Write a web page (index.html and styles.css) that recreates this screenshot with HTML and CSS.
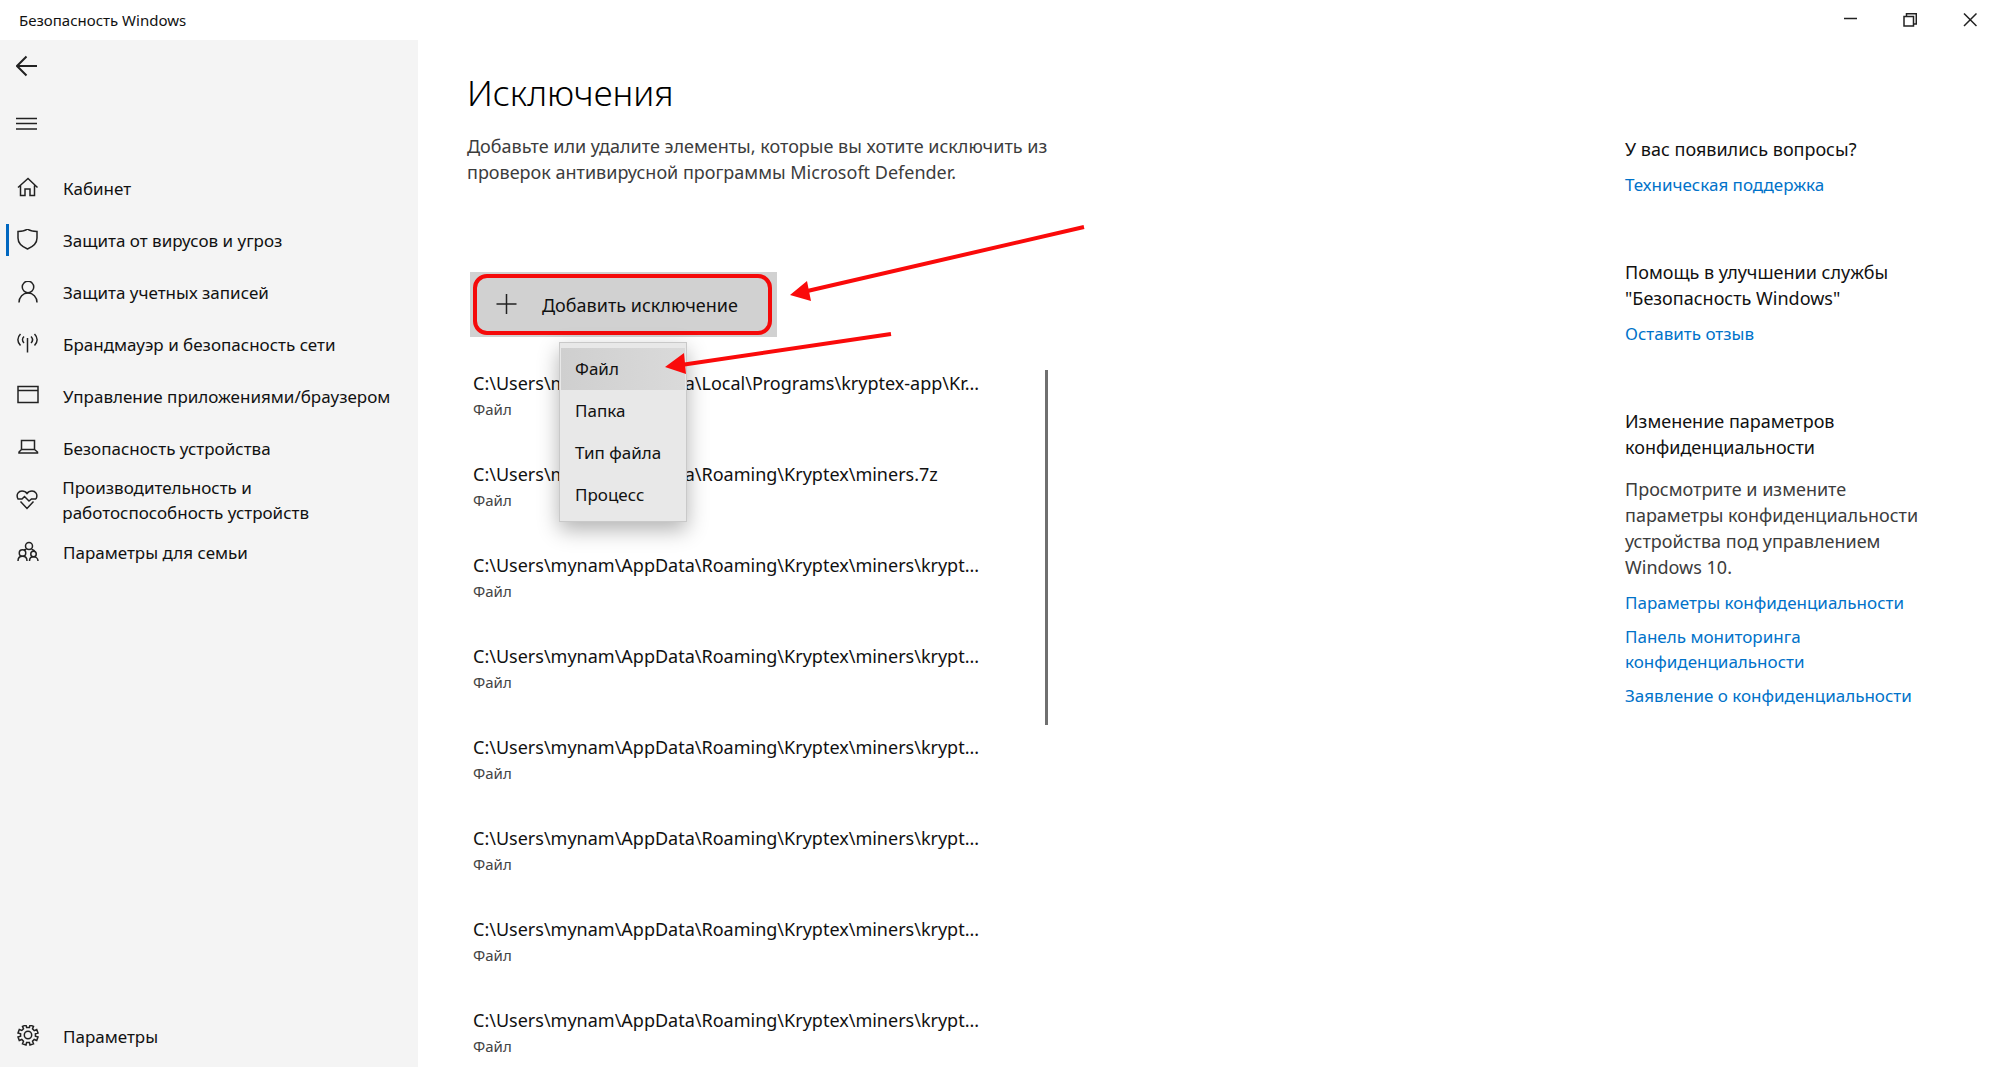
FILE: index.html
```html
<!DOCTYPE html>
<html lang="ru">
<head>
<meta charset="utf-8">
<meta name="viewport" content="width=device-width, initial-scale=1">
<title>Безопасность Windows</title>
<link rel="stylesheet" href="styles.css">
</head>
<body>
<header class="titlebar">
  <span class="titlebar-name">Безопасность Windows</span>
  <div class="window-controls">
    <button type="button" class="window-button" aria-label="Свернуть"><svg width="14" height="14" viewBox="0 0 14 14"><path d="M1 5.500h13"/></svg></button>
    <button type="button" class="window-button" aria-label="Восстановить"><svg width="14" height="14" viewBox="0 0 14 14"><path d="M1 3.500h9.500v9.500H1zM3.500 3.200V.75h9.800v10.250H10.500"/></svg></button>
    <button type="button" class="window-button" aria-label="Закрыть"><svg width="14" height="14" viewBox="0 0 14 14"><path d="M1 .5l12.500 12.500M13.500.5l-12.500 12.500"/></svg></button>
  </div>
</header>
<div class="app">
  <aside class="sidebar">
    <button type="button" class="icon-button" aria-label="Назад"><svg class="icon" viewBox="0 0 22 22"><path class="bold" d="M21 11H1M10.500 1.500L1 11l9.500 9.500"/></svg></button>
    <button type="button" class="icon-button" aria-label="Меню"><svg class="icon" viewBox="0 0 22 22"><path d="M0 5.500h21M0 10.500h21M0 16h21"/></svg></button>
    <nav class="nav">
      <a href="#" class="nav-item"><svg class="icon" viewBox="0 0 22 22"><path d="M1 10.500L11 1.500l9.500 9M3.500 8.500v10h4.500v-6.500h5V18.500h4.500V8.500"/></svg><span>Кабинет</span></a>
      <a href="#" class="nav-item active" aria-current="page"><svg class="icon" viewBox="0 0 22 22"><path d="M10.500 0C8 2 4.500 2.500 1 2.500V9c0 5 3.500 8.500 9.500 11 6-2.500 9.500-6 9.500-11V2.500C16.500 2.500 13 2 10.500 0z"/></svg><span>Защита от вирусов и угроз</span></a>
      <a href="#" class="nav-item"><svg class="icon" viewBox="0 0 22 22"><circle cx="11" cy="6" r="5.750"/><path d="M2 21.500c0-5.500 4-9.500 9-9.500s9 4 9 9.500"/></svg><span>Защита учетных записей</span></a>
      <a href="#" class="nav-item"><svg class="icon" viewBox="0 0 22 22"><path d="M10.500 5v14.500M3.500 1C0 4.500 0 9 3.500 12.500M17.500 1c3.500 3.500 3.500 8 0 11.500M7 3.500c-2 2-2 4.500 0 6.500M14 3.500c2 2 2 4.500 0 6.500"/></svg><span>Брандмауэр и безопасность сети</span></a>
      <a href="#" class="nav-item"><svg class="icon" viewBox="0 0 22 22"><path d="M1 1.500h20v16H1zM1 5.500h20"/></svg><span>Управление приложениями/браузером</span></a>
      <a href="#" class="nav-item"><svg class="icon" viewBox="0 0 22 22"><path d="M4.500 3.500h13v9h-13zM4.500 12.500L2 15v1h18.500v-1L17.500 12.500"/></svg><span>Безопасность устройства</span></a>
      <a href="#" class="nav-item"><svg class="icon" viewBox="0 0 22 22"><path d="M2 10C-.5 5 3 2 6 2c2.500 0 4 1 5 2.500C12 3 13.500 2 16 2c3 0 6.500 3 4 8M1.500 10H6l2.500-2.500 4.500 4.500 2.500-2H20M4.500 12.500L11 19.500l6.500-7"/></svg><span>Производительность и работоспособность устройств</span></a>
      <a href="#" class="nav-item"><svg class="icon" viewBox="0 0 22 22"><circle cx="12" cy="5" r="3.500"/><circle cx="5.500" cy="12" r="3.250"/><circle cx="16.500" cy="13" r="2.750"/><path d="M1 20c0-3 2-4.700 4.500-4.700S10 17 10 20M12.500 20c0-2.500 1.500-4.200 4-4.200s4.500 1.700 4.500 4.200M7 9c.8-.5 1.500-.8 2.500-.8M14.500 8.200c1.700.5 3 1.200 3.500 2.500"/></svg><span>Параметры для семьи</span></a>
    </nav>
    <a href="#" class="nav-item settings"><svg class="icon" viewBox="0 0 22 22"><circle cx="11" cy="10" r="3.700"/><path d="M9 0l.6 2.600h2.800L13 0l3.500 1.400-1 2.500 1.700 1.700 2.500-1L21 8l-2.600.7v2.600L21 12l-1.300 3.500-2.500-1-1.700 1.700 1 2.500L13 20l-.6-2.600H9.600L9 20l-3.500-1.300 1-2.500-1.700-1.700-2.500 1L1 12l2.600-.7V8.700L1 8l1.300-3.500 2.500 1 1.700-1.600-1-2.500z"/></svg><span>Параметры</span></a>
  </aside>
  <main class="content">
    <section class="exclusions">
      <h1>Исключения</h1>
      <p class="lead">Добавьте или удалите элементы, которые вы хотите исключить из<br>проверок антивирусной программы Microsoft Defender.</p>
      <div class="add-wrap">
        <button type="button" class="add-button" aria-haspopup="menu" aria-expanded="true"><svg width="22" height="22" viewBox="0 0 22 22"><path d="M10.500 0v20M.5 10h20"/></svg><span>Добавить исключение</span></button>
        <div class="menu" role="menu">
          <button type="button" role="menuitem" class="menu-item hovered">Файл</button>
          <button type="button" role="menuitem" class="menu-item">Папка</button>
          <button type="button" role="menuitem" class="menu-item">Тип файла</button>
          <button type="button" role="menuitem" class="menu-item">Процесс</button>
        </div>
        <svg class="arrows" width="430" height="160" viewBox="0 0 430 160" aria-hidden="true">
          <path class="shaft" d="M423 7L142 72M230 114L20 145"/>
          <path class="head" d="M129 75l17-14 4 20zM4 147l19-14 2 21z"/>
        </svg>
      </div>
      <div class="list-area">
        <ul class="list">
          <li><span class="path">C:\Users\mynam\AppData\Local\Programs\kryptex-app\Kr...</span><span class="kind">Файл</span></li>
          <li><span class="path">C:\Users\mynam\AppData\Roaming\Kryptex\miners.7z</span><span class="kind">Файл</span></li>
          <li><span class="path">C:\Users\mynam\AppData\Roaming\Kryptex\miners\krypt...</span><span class="kind">Файл</span></li>
          <li><span class="path">C:\Users\mynam\AppData\Roaming\Kryptex\miners\krypt...</span><span class="kind">Файл</span></li>
          <li><span class="path">C:\Users\mynam\AppData\Roaming\Kryptex\miners\krypt...</span><span class="kind">Файл</span></li>
          <li><span class="path">C:\Users\mynam\AppData\Roaming\Kryptex\miners\krypt...</span><span class="kind">Файл</span></li>
          <li><span class="path">C:\Users\mynam\AppData\Roaming\Kryptex\miners\krypt...</span><span class="kind">Файл</span></li>
          <li><span class="path">C:\Users\mynam\AppData\Roaming\Kryptex\miners\krypt...</span><span class="kind">Файл</span></li>
        </ul>
        <div class="scroll-thumb"></div>
      </div>
    </section>
    <aside class="help">
      <section>
        <h2>У вас появились вопросы?</h2>
        <a href="#">Техническая поддержка</a>
      </section>
      <section>
        <h2>Помощь в улучшении службы<br>"Безопасность Windows"</h2>
        <a href="#">Оставить отзыв</a>
      </section>
      <section>
        <h2>Изменение параметров<br>конфиденциальности</h2>
        <p>Просмотрите и измените<br>параметры конфиденциальности<br>устройства под управлением<br>Windows 10.</p>
        <a href="#">Параметры конфиденциальности</a>
        <a href="#">Панель мониторинга<br>конфиденциальности</a>
        <a href="#">Заявление о конфиденциальности</a>
      </section>
    </aside>
  </main>
</div>
</body>
</html>
```
FILE: styles.css
```css
* { box-sizing: border-box; }

body {
  margin: 0;
  height: 100vh;
  display: flex;
  flex-direction: column;
  overflow: hidden;
  background: #fff;
  color: #111;
  font-family: "Noto Sans", "Open Sans", sans-serif;
  font-size: 18px;
  line-height: 26px;
}

button {
  border: 0;
  padding: 0;
  background: none;
  color: inherit;
  font: inherit;
}

a { text-decoration: none; }
h1, h2, p, ul { margin: 0; padding: 0; font-weight: 400; }
ul { list-style: none; }

svg { fill: none; stroke: #222; stroke-width: 1.5; flex: none; }

.titlebar {
  flex: none;
  height: 40px;
  padding-left: 19px;
  display: flex;
  align-items: center;
  justify-content: space-between;
  font-size: 15px;
}
.window-controls { display: flex; height: 100%; }
.window-button { width: 60px; display: grid; place-items: center; }

.app { flex: 1; min-height: 0; display: flex; }

.sidebar {
  flex: none;
  width: 418px;
  display: flex;
  flex-direction: column;
  background: #f4f4f4;
  font-size: 17px;
  line-height: 25px;
}
.icon { width: 22px; height: 22px; }
.bold { stroke-width: 2; }
.icon-button { width: 54px; height: 52px; display: grid; place-items: center; }
.icon-button + .icon-button { margin-top: 6px; }
.nav { margin-top: 12px; }
.nav-item {
  min-height: 52px;
  padding: 0 16px 0 6px;
  display: flex;
  align-items: center;
  gap: 12px;
  color: #111;
}
.nav-item::before { content: ""; width: 3px; height: 32px; margin-right: -4px; }
.nav-item.active::before { background: #0067c0; }
.nav-item span { margin-left: 12px; }
.settings { margin-top: auto; margin-bottom: 5px; }

.content {
  flex: 1;
  min-width: 0;
  display: flex;
  justify-content: space-between;
}
.exclusions { padding: 28px 0 0 49px; }
h1 { font-size: 35px; font-weight: 300; line-height: 50px; color: #000; }
.lead { margin-top: 15px; color: #3c3c3c; }

.add-wrap { position: relative; width: 307px; margin: 87px 0 0 3px; }
.add-button {
  width: 100%;
  height: 65px;
  padding-left: 26px;
  display: flex;
  align-items: center;
  gap: 24px;
  background: #d1d1d1;
  position: relative;
}
.add-button::after {
  content: "";
  position: absolute;
  inset: 2px 5px 2px 3px;
  border: 4px solid #f50a0a;
  border-radius: 14px;
}
.menu {
  position: absolute;
  z-index: 1;
  top: 70px;
  left: 89px;
  width: 128px;
  padding: 5px 1px;
  display: flex;
  flex-direction: column;
  background: #e8e8e8;
  border: 1px solid #c9c9c9;
  box-shadow: 0 8px 20px rgba(0, 0, 0, .3);
}
.menu-item { height: 42px; padding-left: 14px; text-align: left; font-size: 17px; }
.menu-item.hovered { background: linear-gradient(90deg, #cfcfcf, #dadada); }
.arrows { position: absolute; z-index: 2; top: -52px; left: 191px; }
.shaft { stroke: #fa0a0a; stroke-width: 4; }
.head { stroke: none; fill: #fa0a0a; }

.list-area { display: flex; justify-content: space-between; width: 575px; margin: 33px 0 0 6px; }
.list li { height: 91px; }
.path { display: block; color: #111; }
.kind { display: block; font-size: 15px; color: #444; }
.scroll-thumb { width: 3px; height: 355px; background: #707070; }

.help { flex: none; width: 375px; padding-top: 96px; display: flex; flex-direction: column; gap: 62px; }
.help section { display: flex; flex-direction: column; gap: 9px; }
.help h2 { font-size: 18px; line-height: 26px; color: #111; }
.help h2 + p { margin-top: 7px; color: #3c3c3c; }
.help a { font-size: 17px; line-height: 25px; color: #0072c9; }
.help h2 + a, .help p + a { margin-top: 1px; }
```
